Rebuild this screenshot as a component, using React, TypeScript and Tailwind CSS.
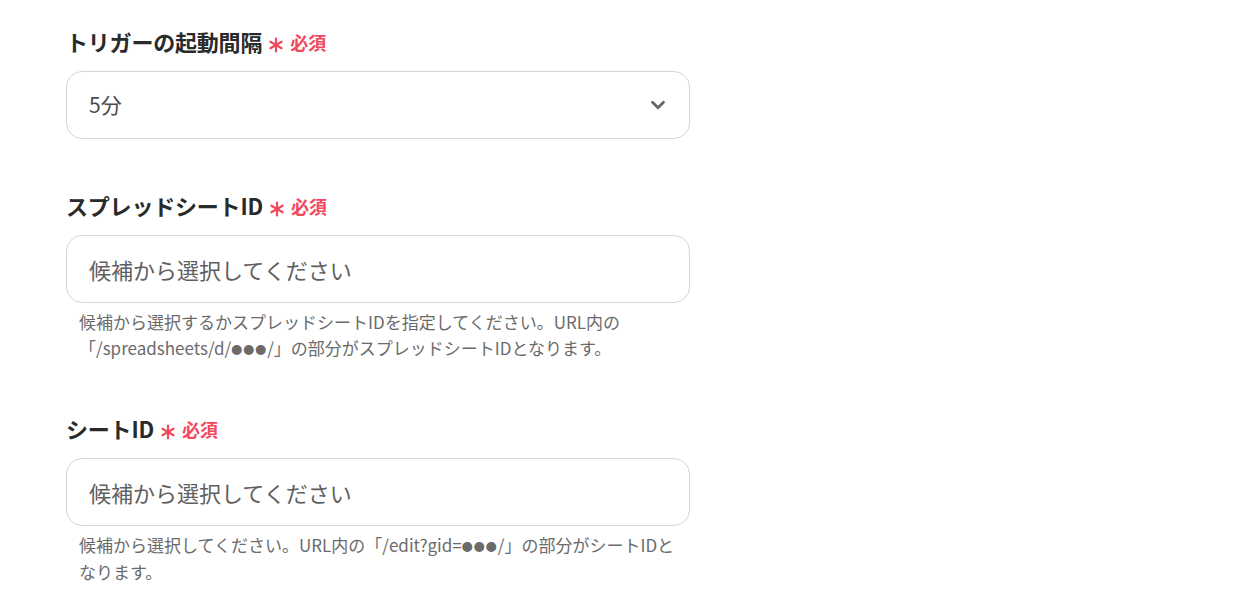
import { ChevronDown } from "lucide-react";

const font = {
  fontFamily: '"Noto Sans CJK JP", "Noto Sans", sans-serif',
};

const Required = () => (
  <span className="flex items-center gap-[6px] ml-[6px]">
    <svg width="16" height="16" viewBox="0 0 16 16" className="mt-[8px] text-[#f2495f]">
      <g stroke="currentColor" strokeWidth="2.2" strokeLinecap="round">
        <line x1="8" y1="1.5" x2="8" y2="14.5" />
        <line x1="2.4" y1="4.75" x2="13.6" y2="11.25" />
        <line x1="2.4" y1="11.25" x2="13.6" y2="4.75" />
      </g>
    </svg>
    <span className="text-[18px] font-bold text-[#f2495f] leading-none mt-[2px]">必須</span>
  </span>
);

const Label = ({ children }: { children: string }) => (
  <div className="flex items-center h-[28px]">
    <span className="text-[22px] font-bold text-[#2a2a2a] leading-[28px] tracking-[-0.2px]">{children}</span>
    <Required />
  </div>
);

const Dots = () => <span className="text-[11px] tracking-[1px] align-[1px]">●●●</span>;

const Field = ({
  label,
  value,
  placeholder,
  select,
  help,
}: {
  label: string;
  value?: string;
  placeholder?: string;
  select?: boolean;
  help?: React.ReactNode[];
}) => (
  <div className="flex flex-col">
    <Label>{label}</Label>
    <div className="mt-[16px] h-[68px] w-[624px] rounded-[16px] border border-[#d3d5da] bg-white flex items-center justify-between pl-[22px] pr-[20px]">
      {value ? (
        <span className="text-[21px] text-[#4a4a4a]">{value}</span>
      ) : (
        <span className="text-[22px] text-[#5f5f5f]">{placeholder}</span>
      )}
      {select && <ChevronDown size={22} strokeWidth={3} className="text-[#666666]" />}
    </div>
    {help && (
      <div className="mt-[6px] pl-[13px] w-[640px] text-[17px] leading-[26px] text-[#6b6b6b]">
        {help.map((l, i) => (
          <div key={i} className="whitespace-nowrap">
            {l}
          </div>
        ))}
      </div>
    )}
  </div>
);

export default function App() {
  return (
    <div className="w-[1254px] h-[597px] bg-white overflow-hidden" style={font}>
      <div className="flex flex-col gap-[52px] pl-[66px] pt-[27px]">
        <Field label="トリガーの起動間隔" value="5分" select />
        <Field
          label="スプレッドシートID"
          placeholder="候補から選択してください"
          help={[
            "候補から選択するかスプレッドシートIDを指定してください。URL内の",
            <>
              「/spreadsheets/d/<Dots />/」の部分がスプレッドシートIDとなります。
            </>,
          ]}
        />
        <Field
          label="シートID"
          placeholder="候補から選択してください"
          help={[
            <>
              候補から選択してください。URL内の「/edit?gid=<Dots />/」の部分がシートIDと
            </>,
            "なります。",
          ]}
        />
      </div>
    </div>
  );
}
